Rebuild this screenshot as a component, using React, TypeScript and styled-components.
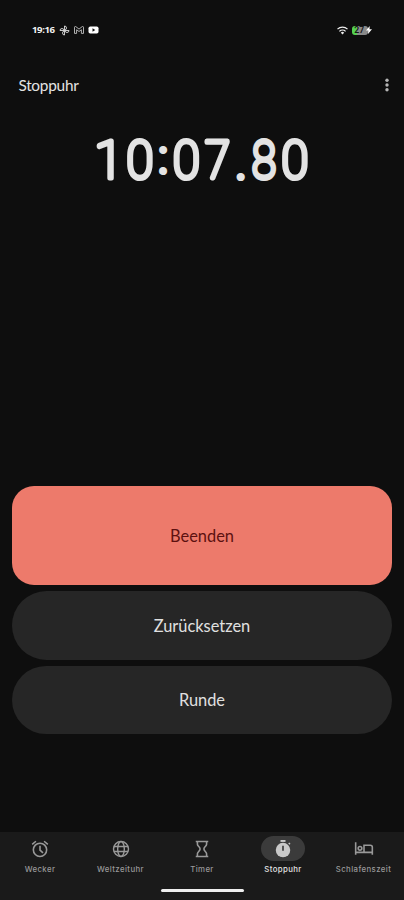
import React from "react";
import styled, { createGlobalStyle } from "styled-components";

const Global = createGlobalStyle`
  * { box-sizing: border-box; }
  body { margin: 0; background: #0e0e0e; }
`;

const Screen = styled.div`
  width: 404px;
  height: 900px;
  display: flex;
  flex-direction: column;
  background: #0e0e0e;
  color: #e3e3e3;
  font-family: Lato, "Liberation Sans", sans-serif;
  overflow: hidden;
`;

const StatusBar = styled.div`
  height: 60px;
  padding: 0 32px 0 32px;
  display: flex;
  align-items: center;
  justify-content: space-between;
`;

const StatusGroup = styled.div<{ $gap: number }>`
  display: flex;
  align-items: center;
  gap: ${(p) => p.$gap}px;
  svg { display: block; }
`;

const Clock = styled.span`
  width: 23px;
  font: 700 9.6px/12px "Open Sans", sans-serif;
  letter-spacing: -0.4px;
  color: #f2f2f2;
`;

const Battery = styled.div`
  width: 16px;
  height: 9px;
  padding-right: 1.5px;
  border-radius: 3px;
  background: linear-gradient(90deg, #55d252 0 4.6px, #8a8a8a 4.6px);
  color: #171717;
  font: 600 8.6px/9.5px Roboto, sans-serif;
  text-align: center;
`;

const Charge = styled.svg`
  margin-left: -2px;
`;

const Header = styled.header`
  height: 50px;
  padding: 0 14px 0 18.4px;
  display: flex;
  align-items: center;
  justify-content: space-between;
`;

const Title = styled.h1`
  margin: 0 0 1px;
  font-size: 15.4px;
  line-height: 20px;
  font-weight: 400;
  letter-spacing: -0.25px;
`;

const Readout = styled.svg`
  display: block;
  width: 404px;
  height: 100px;
  font-family: Roboto, sans-serif;
  font-size: 52px;
  font-weight: 100;
  text-anchor: middle;
  fill: #e3e3e3;
  stroke: #e3e3e3;
  stroke-width: 5px;
  stroke-linejoin: round;
`;

const Mark = styled.text<{ $size: number }>`
  font-size: ${(p) => p.$size}px;
  font-weight: 300;
  stroke-width: 4.2px;
`;

const Actions = styled.main`
  margin-top: 276px;
  padding: 0 12px;
  display: flex;
  flex-direction: column;
  gap: 6px;
`;

const ActionButton = styled.button<{ $height: number; $primary?: boolean }>`
  height: ${(p) => p.$height}px;
  border: 0;
  padding: 0;
  border-radius: ${(p) => (p.$primary ? 22 : 35)}px;
  background: ${(p) => (p.$primary ? "#ed7a6b" : "#262626")};
  color: ${(p) => (p.$primary ? "#5c1110" : "#e0e0e0")};
  font: 400 16.4px/22px Lato, sans-serif;
`;

const BottomBar = styled.footer`
  height: 68px;
  margin-top: auto;
  background: #1a1a1a;
  display: flex;
  flex-direction: column;
  align-items: center;
`;

const Nav = styled.nav`
  width: 404px;
  height: 57px;
  padding-top: 4px;
  display: grid;
  grid-template-columns: 80px 81px 82px 80px 81px;
`;

const Tab = styled.div<{ $active?: boolean }>`
  display: flex;
  flex-direction: column;
  align-items: center;
  color: ${(p) => (p.$active ? "#e3e3e3" : "#999")};
  font: 500 7.8px/10px Inter, sans-serif;
  letter-spacing: 0.4px;
  white-space: nowrap;
`;

const Pill = styled.div<{ $active?: boolean }>`
  width: 44px;
  height: 25px;
  margin-bottom: 3px;
  border-radius: 13px;
  display: grid;
  place-items: center;
  background: ${(p) => (p.$active ? "#3b3b3b" : "transparent")};
  color: ${(p) => (p.$active ? "#c9c9c9" : "#999")};
  svg { display: block; }
`;

const HomeHandle = styled.div`
  width: 83px;
  height: 3px;
  border-radius: 2px;
  background: #eee;
`;

const iconProps = {
  width: 20,
  height: 20,
  viewBox: "0 0 24 24",
  fill: "none",
  stroke: "currentColor",
  strokeWidth: 1.9,
};

const AlarmIcon = () => (
  <svg {...iconProps}>
    <circle cx="12" cy="13" r="8" />
    <path d="M12 8v5.3l3.6 3.4M2.6 6.4l4.5-3.7M21.4 6.4l-4.5-3.7" />
  </svg>
);

const GlobeIcon = () => (
  <svg {...iconProps} strokeWidth={1.7}>
    <circle cx="12" cy="12" r="9" />
    <ellipse cx="12" cy="12" rx="4" ry="9" />
    <path d="M3.6 9h16.8M3.6 15h16.8" />
  </svg>
);

const HourglassIcon = () => (
  <svg {...iconProps}>
    <path d="M4.5 3h15M4.5 21h15M6.5 3v3.2c0 2.5 3.2 3.2 3.2 5.8s-3.2 3.3-3.2 5.8V21M17.5 3v3.2c0 2.5-3.2 3.2-3.2 5.8s3.2 3.3 3.2 5.8V21" />
  </svg>
);

const StopwatchIcon = () => (
  <svg {...iconProps} fill="currentColor" stroke="none">
    <path d="M9 1.2h6v2.3H9z" />
    <path d="m18.2 5.3 1.3-1.2 1.5 1.5-1.3 1.3z" />
    <circle cx="12" cy="13.3" r="8.7" />
    <path d="M11 8.2h2v6h-2z" fill="#3b3b3b" />
  </svg>
);

const BedIcon = () => (
  <svg {...iconProps}>
    <path d="M2 4v15M2 16h20M22 19V10c0-1.7-1-2.5-2.5-2.5H12V16" />
    <circle cx="7.2" cy="11.2" r="2.2" />
  </svg>
);

const tabs = [
  { label: "Wecker", Icon: AlarmIcon },
  { label: "Weltzeituhr", Icon: GlobeIcon },
  { label: "Timer", Icon: HourglassIcon },
  { label: "Stoppuhr", Icon: StopwatchIcon, active: true },
  { label: "Schlafenszeit", Icon: BedIcon },
];

// Condensed digits, each centred on x and narrowed by its own factor.
const digits = [
  { char: "1", x: 108.8, narrow: 1 },
  { char: "0", x: 140, narrow: 0.94 },
  { char: "0", x: 186.5, narrow: 0.94 },
  { char: "7", x: 217.5, narrow: 0.88 },
  { char: "8", x: 264, narrow: 0.84 },
  { char: "0", x: 295, narrow: 0.94 },
];

const Digit = ({ char, x, narrow }: (typeof digits)[number]) => (
  <text transform={`translate(${x} 178) scale(${narrow} 1)`}>{char}</text>
);

export default function App() {
  return (
    <>
      <Global />
      <Screen>
        <StatusBar>
          <StatusGroup $gap={4}>
            <Clock>19:16</Clock>
            <svg width="11" height="11" viewBox="0 0 22 22" fill="none" stroke="#ddd" strokeWidth="1.8">
              <path d="M11 11V2a4 4 0 0 1 0 8M11 11h9a4 4 0 0 1-8 0M11 11v9a4 4 0 0 1 0-8M11 11H2a4 4 0 0 1 8 0" />
            </svg>
            <svg width="10" height="8" viewBox="0 0 20 16" fill="none" stroke="#ccc" strokeWidth="1.7">
              <path d="M1 14.8V2.5C1 1 2.8.5 4 1.5l6 4.7 6-4.7c1.2-1 3-.5 3 1v12.3h-4.2V7.5L10 11 5.2 7.5v7.3z" />
            </svg>
            <svg width="11" height="8" viewBox="0 0 22 16">
              <rect x="1" y="1" width="20" height="14" rx="3.5" fill="#fff" />
              <path d="m9 4.7 5.5 3.3L9 11.3z" fill="#111" />
            </svg>
          </StatusGroup>
          <StatusGroup $gap={4}>
            <svg width="11" height="9" viewBox="0 0 22 18" fill="none" stroke="#eee" strokeWidth="2.6">
              <path d="M1 6.2a14.5 14.5 0 0 1 20 0M4.8 10.7a9 9 0 0 1 12.4 0" />
              <path d="m7.7 13.4 3.3 3.6 3.3-3.6a4.6 4.6 0 0 0-6.6 0z" fill="#eee" stroke="none" />
            </svg>
            <StatusGroup $gap={0}>
              <Battery>27</Battery>
              <Charge width="6" height="8" viewBox="0 0 12 16">
                <path d="M7.5 0 0 9h4.5L4 16l8-9.5H7z" fill="#fff" />
              </Charge>
            </StatusGroup>
          </StatusGroup>
        </StatusBar>
        <Header>
          <Title>Stoppuhr</Title>
          <svg width="6" height="14" viewBox="0 0 6 14" fill="#b5b5b5">
            <circle cx="3" cy="2.3" r="1.7" />
            <circle cx="3" cy="7" r="1.7" />
            <circle cx="3" cy="11.7" r="1.7" />
          </svg>
        </Header>
        <Readout viewBox="0 110 404 100">
          {digits.slice(0, 2).map((d) => <Digit key={d.x} {...d} />)}
          <Mark $size={46} x="163" y="172.5">:</Mark>
          {digits.slice(2, 4).map((d) => <Digit key={d.x} {...d} />)}
          <Mark $size={48} x="241" y="178.5">.</Mark>
          {digits.slice(4).map((d) => <Digit key={d.x} {...d} />)}
        </Readout>
        <Actions>
          <ActionButton $height={99} $primary>Beenden</ActionButton>
          <ActionButton $height={69}>Zurücksetzen</ActionButton>
          <ActionButton $height={68}>Runde</ActionButton>
        </Actions>
        <BottomBar>
          <Nav>
            {tabs.map(({ label, Icon, active }) => (
              <Tab key={label} $active={active}>
                <Pill $active={active}>
                  <Icon />
                </Pill>
                {label}
              </Tab>
            ))}
          </Nav>
          <HomeHandle />
        </BottomBar>
      </Screen>
    </>
  );
}
